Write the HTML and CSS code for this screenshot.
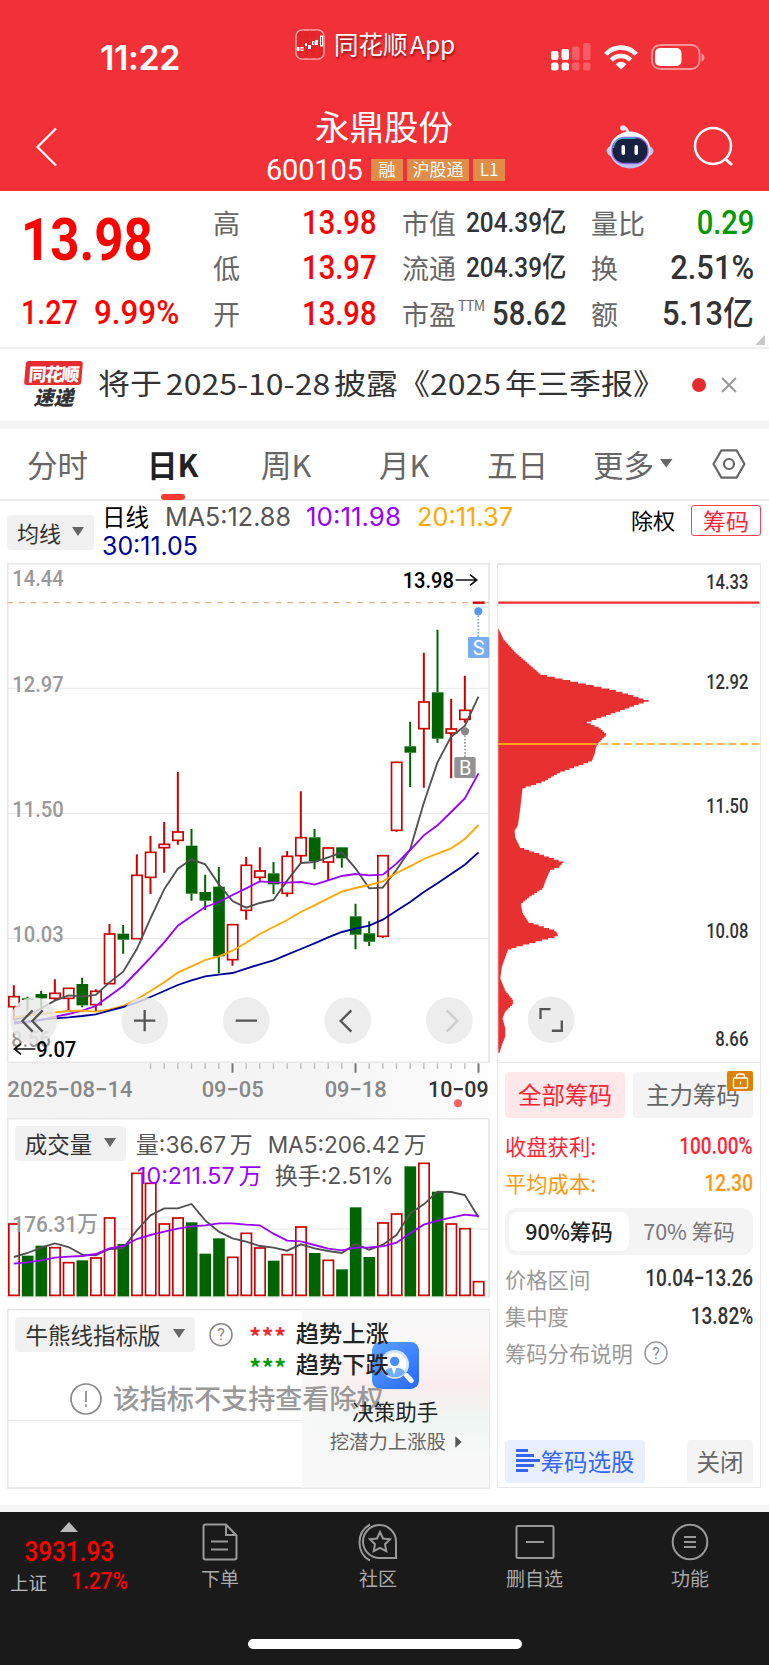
FILE: index.html
```html
<!DOCTYPE html>
<html lang="zh-CN">
<head>
<meta charset="utf-8">
<title>永鼎股份 600105</title>
<link rel="stylesheet" href="styles.css">
</head>
<body>
<header class="top">
  <div class="status">
    <span class="clock">11:22</span>
    <div class="app">
      <svg width="30" height="31" viewBox="0 0 30 31"><rect x="1" y="1" width="28" height="29" rx="6" fill="#e5242a" stroke="#f8a5a6" stroke-width="1.5"/><path d="M1 10H29M8 1V30M15 1V30M22 1V30" stroke="#d8353a" stroke-width=".6"/><g fill="#fff"><rect x="2" y="18" width="2.5" height="4"/><rect x="10" y="14" width="2" height="3"/><rect x="13" y="16" width="3" height="4"/><rect x="20" y="11" width="3" height="5"/></g><g fill="none" stroke="#fff"><rect x="6" y="18.500" width="2" height="3"/><rect x="17.500" y="12.500" width="1.500" height="3"/><rect x="25.500" y="7" width="2" height="10"/></g></svg>
      <span>同花顺 App</span>
    </div>
    <svg class="signal" width="40" height="28" viewBox="0 0 40 28" fill="#fff"><rect y="8" width="7.500" height="9" rx="2"/><rect x="10.500" y="6" width="7.500" height="11" rx="2"/><g opacity=".22"><rect x="21" y="3.500" width="7.500" height="13.500" rx="2"/><rect x="32" y="0" width="7.500" height="17" rx="2"/></g><rect y="19.500" width="7.500" height="8" rx="2.500"/><rect x="10.500" y="19.500" width="7.500" height="8" rx="2.500"/><g opacity=".22"><rect x="21" y="19.500" width="7.500" height="8" rx="2.500"/><rect x="32" y="19.500" width="7.500" height="8" rx="2.500"/></g></svg>
    <svg class="wifi" width="34" height="25" viewBox="0 0 34 25" fill="none" stroke="#fff" stroke-width="4.600"><path d="M1.800 9.200C10 .4 24 .4 32.200 9.200"/><path d="M7.300 15C12.500 9.600 21.500 9.600 26.700 15"/><path d="M11.700 19.200Q17 14.300 22.300 19.200L17 24.600Z" fill="#fff" stroke="none"/></svg>
    <svg class="battery" width="55" height="26" viewBox="0 0 55 26"><rect x="1" y="1" width="47.500" height="24" rx="8" fill="none" stroke="#f99497" stroke-width="1.800"/><rect x="4" y="4" width="26.500" height="18" rx="5" fill="#fff"/><path d="M50.500 9.500q3 1 3 4t-3 4z" fill="#f99497"/></svg>
  </div>
  <div class="nav">
    <svg class="back" width="24" height="40" viewBox="0 0 24 40"><path d="M21 1.500L2.500 20 21 38.500" fill="none" stroke="#fff" stroke-width="2.200"/></svg>
    <div class="stock">
      <h1>永鼎股份</h1>
      <div class="code"><span class="num6">600105</span><i>融</i><i class="w">沪股通</i><i>L1</i></div>
    </div>
    <svg class="robot" width="48" height="46" viewBox="0 0 48 46"><defs><linearGradient id="hd" x2="0" y2="1"><stop stop-color="#fff"/><stop offset="1" stop-color="#b9bdf0"/></linearGradient></defs><path d="M22 10C22 6 20 3.500 17.500 4" stroke="#e9eaff" stroke-width="3" fill="none"/><circle cx="17" cy="4" r="2.800" fill="#e9eaff"/><ellipse cx="24" cy="27" rx="23.500" ry="9" fill="#c6c7f1"/><ellipse cx="24" cy="26" rx="20.500" ry="18.500" fill="url(#hd)"/><rect x="6" y="13.500" width="36" height="26" rx="12.500" fill="#18213f" stroke="#8866e8" stroke-width="1.300"/><path d="M7.500 24q1-9 9-9.700h13" fill="none" stroke="#2ccbe6" stroke-width="1"/><rect x="15.500" y="21" width="3.500" height="10" rx="1.700" fill="#fff"/><rect x="28.500" y="21" width="3.500" height="10" rx="1.700" fill="#fff"/></svg>
    <svg class="search" width="42" height="42" viewBox="0 0 42 42" fill="none" stroke="#fff" stroke-width="2.500"><circle cx="20" cy="20" r="18"/><path d="M31.500 32l7.500 7" stroke-width="3"/></svg>
  </div>
</header>

<section class="quote">
  <div class="price"><b class="din l">13.98</b><div><span class="din l">1.27</span><span class="din l pct">9.99%</span></div></div>
  <dl class="q1"><dt>高</dt><dd class="din">13.98</dd><dt>低</dt><dd class="din">13.97</dd><dt>开</dt><dd class="din">13.98</dd></dl>
  <dl class="q2"><dt>市值</dt><dd class="din sm">204.39亿</dd><dt>流通</dt><dd class="din sm">204.39亿</dd><dt>市盈<sup>TTM</sup></dt><dd class="din">58.62</dd></dl>
  <dl class="q3"><dt>量比</dt><dd class="din green">0.29</dd><dt>换</dt><dd class="din wide">2.51%</dd><dt>额</dt><dd class="din wide">5.13亿</dd></dl>
  <svg class="corner" width="10" height="10"><path d="M10 0V10H0Z" fill="#c8c8c8"/></svg>
</section>

<section class="news">
  <div class="logo"><b>同花顺</b><em>速递</em></div>
  <svg class="newsline" width="567" height="44"><text x="-1" y="32" textLength="567" lengthAdjust="spacingAndGlyphs">将于 2025-10-28 披露《2025 年三季报》</text></svg>
  <span class="dot"></span>
  <svg class="x" width="16" height="16" viewBox="0 0 16 16"><path d="M1 1L15 15M15 1L1 15" stroke="#999" stroke-width="2"/></svg>
</section>

<nav class="tabs">
  <span>分时</span><span class="on">日K</span><span>周K</span><span>月K</span><span>五日</span><span class="more">更多<svg width="13" height="9"><path d="M0 0H12.500L6.200 8.500Z" fill="#666"/></svg></span>
  <svg width="34" height="30" viewBox="0 0 34 30" fill="none" stroke="#666" stroke-width="2.200"><path d="M9.500 1.300H24.500L32.500 15 24.500 28.700H9.500L1.500 15Z" stroke-linejoin="round"/><circle cx="17" cy="15" r="5"/></svg>
</nav>

<section class="avg">
  <button class="drop">均线<svg width="12" height="9"><path d="M0 0H12L6 9Z" fill="#666"/></svg></button>
  <svg class="legend" width="520" height="62" viewBox="102 501 520 62"><text x="102" y="526" textLength="47" fill="#000" class="cn">日线</text><text x="165" y="526" textLength="126">MA5:12.88</text><text x="306" y="526" textLength="95" fill="#9900ff">10:11.98</text><text x="417" y="526" textLength="96" fill="#ffa800">20:11.37</text><text x="102" y="555" textLength="96" fill="#000099">30:11.05</text></svg>
  <span class="chuquan">除权</span><button class="chip">筹码</button>
</section>

<main>
  <div class="left">
    <svg id="kline" width="485" height="500" viewBox="21 9 1455 1500">
      <g fill="none" stroke="#e8e8e8" stroke-width="4"><rect x="23" y="11" width="1444" height="1496" stroke-width="5"/><path d="M23 385H1467M23 761H1467M23 1136H1467" stroke-width="3"/></g>
      <path d="M22 128H1467" stroke="#dbb486" stroke-width="3.500" stroke-dasharray="17 18"/>
      <g class="dinsvg" fill="#999"><text x="37" y="79" textLength="154">14.44</text><text x="37" y="396" textLength="154">12.97</text><text x="37" y="771" textLength="154">11.50</text><text x="37" y="1145" textLength="154">10.03</text><text x="34" y="1460" textLength="118">8.56</text></g>
      <g id="candles"></g>
      <g class="dinsvg"><text x="1208" y="83" textLength="154" fill="#000">13.98</text></g>
      <path d="M1367 60H1428M1410 44L1430 60 1410 76" fill="none" stroke="#111" stroke-width="5"/>
      <circle cx="1435" cy="154" r="12" fill="#5599ee"/><path d="M1435 166V232" stroke="#77aaf2" stroke-width="5" stroke-dasharray="5 5"/><rect x="1404" y="231" width="64" height="63" rx="5" fill="#78adf3"/>
      <circle cx="1395" cy="514" r="12" fill="#888"/><path d="M1395 526V592" stroke="#999" stroke-width="5" stroke-dasharray="5 5"/><rect x="1363" y="591" width="64" height="63" rx="5" fill="#929292"/>
      <g font-family="Roboto" font-size="60" fill="#fff" text-anchor="middle"><text x="1436" y="284">S</text><text x="1396" y="644">B</text></g>
      <g fill="#e9e9e9" fill-opacity=".82"><circle cx="101" cy="1382" r="70"/><circle cx="434" cy="1382" r="70"/><circle cx="739" cy="1382" r="70"/><circle cx="1043" cy="1382" r="70"/><circle cx="1348" cy="1382" r="70"/></g>
      <g fill="none" stroke="#555" stroke-width="7"><path d="M98 1351L67 1383 98 1415M128 1351L97 1383 128 1415M402 1382H466M434 1350V1414M707 1382H771M1054 1351L1022 1383 1054 1415"/><path d="M1340 1351L1372 1383 1340 1415" stroke="#ccc"/></g>
      <g class="dinsvg"><text x="109" y="1490" textLength="120" fill="#000">9.07</text></g>
      <path d="M106 1467H45M63 1451L43 1467 63 1483" fill="none" stroke="#111" stroke-width="5"/>
    </svg>
    <svg id="axis" width="485" height="55" viewBox="21 190 1455 165">
      <defs><linearGradient id="ax"><stop stop-color="#f3f3f3"/><stop offset=".65" stop-color="#f5f5f5"/><stop offset="1" stop-color="#fdfdfd"/></linearGradient></defs>
      <rect x="21" y="190" width="1448" height="165" fill="url(#ax)"/><g id="ticks"></g>
      <g class="dinsvg" fill="#888"><text x="22" y="293" textLength="376">2025−08−14</text><text x="605" y="293" textLength="186">09−05</text><text x="974" y="293" textLength="186">09−18</text><text x="1284" y="293" textLength="182" fill="#333">10−09</text></g>
      <circle cx="1374" cy="311" r="12" fill="#f96060"/>
    </svg>
    <div class="vol">
      <svg id="volume" width="485" height="180" viewBox="21 355 1455 540">
        <g fill="none" stroke="#e8e8e8"><rect x="23" y="357" width="1444" height="535" stroke-width="5"/><path d="M23 688H1467" stroke-width="3"/></g>
        <g id="bars"></g>
        <g class="dinsvg" fill="#999"><text x="37" y="697" textLength="257">176.31万</text></g>
        <g id="vlines"></g>
        <g class="voltext" fill="#555"><text x="408" y="459" textLength="350">量:36.67 万</text><text x="803" y="459" textLength="476">MA5:206.42 万</text><text x="411" y="553" textLength="374" fill="#9900ff">10:211.57 万</text><text x="824" y="553" textLength="357">换手:2.51%</text></g>
      </svg>
      <button class="drop">成交量<svg width="12" height="9"><path d="M0 0H12L6 9Z" fill="#666"/></svg></button>
    </div>
    <div class="bull">
      <svg width="485" height="180" viewBox="21 27 1455 540">
        <defs><linearGradient id="bg" x2="0" y2="1"><stop stop-color="#f8f8f8"/><stop offset=".2" stop-color="#faf7f7"/><stop offset=".42" stop-color="#fbecee"/><stop offset=".62" stop-color="#eff6f3"/><stop offset=".85" stop-color="#f8f8f8"/></linearGradient><linearGradient id="fade"><stop stop-color="#f8f8f8"/><stop offset=".75" stop-color="#f8f8f8" stop-opacity="0"/></linearGradient><linearGradient id="bl" x2="1" y2="1"><stop stop-color="#5aa5ff"/><stop offset="1" stop-color="#2868fb"/></linearGradient></defs>
        <rect x="23" y="29" width="1444" height="535" fill="none" stroke="#e8e8e8" stroke-width="5"/><path d="M23 361H906" stroke="#e8e8e8" stroke-width="3"/>
        <rect x="906" y="31" width="561" height="531" fill="url(#bg)"/><rect x="906" y="31" width="300" height="531" fill="url(#fade)"/>
        <rect x="1116" y="126" width="141" height="141" rx="25" fill="url(#bl)"/><circle cx="1184" cy="193" r="43" fill="#d4e6ff"/><circle cx="1184" cy="193" r="35" fill="#fff"/><circle cx="1184" cy="184" r="14" fill="#448cff"/><path d="M1153 218Q1158 203 1175 204L1182 224 1189 204Q1210 203 1215 218A43 43 0 0 1 1153 218Z" fill="#71aeff"/><path d="M1220 227L1234 242" stroke="#fff" stroke-width="15" stroke-linecap="round"/>
        <g fill="none" stroke="#888" stroke-width="5"><circle cx="663" cy="104" r="33" stroke-width="4.500"/><circle cx="258" cy="297" r="45"/><path d="M258 273V306M258 313V320"/></g>
        <g class="cn"><text x="663" y="121" text-anchor="middle" font-size="48" fill="#888" font-family="Roboto">?</text><text x="748 785 823" y="137" font-size="70" font-weight="700" fill="#f02b2f">***</text><text x="748 785 823" y="230" font-size="70" font-weight="700" fill="#009b00">***</text>
        <text x="887" y="126" textLength="279" font-size="69" font-weight="500" fill="#222">趋势上涨</text><text x="887" y="218" textLength="279" font-size="69" font-weight="500" fill="#222">趋势下跌</text>
        <text x="338" y="328" textLength="813" font-size="81" fill="#999" font-weight="500">该指标不支持查看除权</text>
        <text x="1057" y="361" textLength="258" font-size="64" fill="#222">决策助手</text><text x="989" y="448" textLength="349" font-size="58" fill="#666">挖潜力上涨股</text></g><path d="M1366 409L1385 426 1366 443Z" fill="#555"/>
      </svg>
      <button class="drop">牛熊线指标版<svg width="12" height="9"><path d="M0 0H12L6 9Z" fill="#666"/></svg></button>
    </div>
  </div>

  <aside class="panel">
    <svg id="chips" width="262" height="500" viewBox="24 9 786 1500">
      <g id="dist"></g><path d="M24 128H809" stroke="#f22b30" stroke-width="7"/><path d="M24 553H320" stroke="#ffa11a" stroke-width="6"/><path d="M331 553H809" stroke="#f8a11a" stroke-width="5" stroke-dasharray="24 11"/>
      <g class="dinsvg small" fill="#333"><text x="649" y="88" textLength="127">14.33</text><text x="649" y="387" textLength="127">12.92</text><text x="649" y="762" textLength="127">11.50</text><text x="649" y="1137" textLength="127">10.08</text><text x="676" y="1460" textLength="100">8.66</text></g>
      <circle cx="183" cy="1382" r="70" fill="#ececec"/><path d="M151 1380V1350H181M215 1384V1415H185" fill="none" stroke="#555" stroke-width="7"/>
    </svg>
    <div class="info">
      <div class="pick"><button class="hot">全部筹码</button><button>主力筹码<span class="lock"><svg width="26" height="20" viewBox="0 0 26 20" fill="none" stroke="#fff" stroke-width="1.300"><rect x="6.500" y="7" width="14" height="10" rx="1"/><path d="M9.500 7V5.500q0-2.500 2.500-2.500h3q2.500 0 2.500 2.500V7M13.500 10.500v3"/></svg></span></button></div>
      <div class="row red"><span>收盘获利:</span><b class="din">100.00%</b></div>
      <div class="row org"><span>平均成本:</span><b class="din">12.30</b></div>
      <div class="seg"><b>90%筹码</b><span>70% 筹码</span></div>
      <div class="row"><span>价格区间</span><b class="din">10.04−13.26</b></div>
      <div class="row"><span>集中度</span><b class="din">13.82%</b></div>
      <div class="row help"><span>筹码分布说明</span><svg width="24" height="24" viewBox="0 0 24 24"><circle cx="12" cy="12" r="11" fill="none" stroke="#999" stroke-width="1.500"/><text x="12" y="17.500" text-anchor="middle" font-size="16" fill="#888" font-family="Roboto">?</text></svg></div>
      <div class="foot"><button class="blue"><svg width="24" height="24" viewBox="0 0 24 24"><path d="M0 1.500H12M0 6.500H18M0 11.500H24M0 16.500H18M0 21.500H12" stroke="#3465f5" stroke-width="2.800"/></svg>筹码选股</button><button>关闭</button></div>
    </div>
  </aside>
</main>

<footer>
  <div class="bar">
    <div class="index"><svg width="18" height="10"><path d="M9 0L18 10H0Z" fill="#bbb"/></svg><b class="din">3931.93</b><p><span>上证</span><b class="din l">1.27%</b></p></div>
    <div class="item"><svg width="36" height="38" viewBox="0 0 36 38"><path d="M3.500 1.500H24L34.500 12.500V34.500Q34.500 36.500 32.500 36.500H3.500Q1.500 36.500 1.500 34.500V3.500Q1.500 1.500 3.500 1.500ZM24 1.500V12H34.500M9 18.500H26M9 26.500H26"/></svg>下单</div>
    <div class="item"><svg width="40" height="38" viewBox="0 0 40 38"><path d="M12 1.500C-2 9-2 30 12 37.500M38 35H23A16.500 16.500 0 1 1 38 18.500ZM22 9l3 6.500 7 .8-5 4.900 1.300 7-6.300-3.400-6.300 3.400 1.300-7-5-4.900 7-.8Z"/></svg>社区</div>
    <div class="item"><svg width="40" height="38" viewBox="0 0 40 38"><rect x="1.500" y="3" width="37" height="32" rx="1.500"/><path d="M11 19H29"/></svg>删自选</div>
    <div class="item"><svg width="38" height="38" viewBox="0 0 38 38"><circle cx="19" cy="19" r="17.300"/><path d="M13 14H25M13 19H25M13 24H25"/></svg>功能</div>
  </div>
  <div class="home"></div>
</footer>
<script src="chart.js"></script>
</body>
</html>
```
FILE: styles.css
```css
* { box-sizing: border-box; }
body { margin: 0; width: 769px; background: #fff; font-family: "Noto Sans CJK SC", sans-serif; color: #333; overflow-x: hidden; }
button { border: 0; padding: 0 0 2px; font: inherit; color: inherit; background: none; }
svg { display: block; flex: none; }
svg text { white-space: pre; }
.din { font-family: Roboto, "Noto Sans CJK SC", sans-serif; font-weight: 500; display: inline-block; transform: scaleX(.87); transform-origin: right center; white-space: nowrap; }
.din.l { transform-origin: left center; }
.din.pct { transform: scaleX(.95); }
.din.wide { transform: scaleX(.92); }

.top { height: 191px; background: #f23038; color: #fff; }
.status { height: 100px; display: flex; align-items: flex-start; }
.clock { width: 194px; margin-left: 100px; margin-right: 1px; margin-top: 38px; font: 600 34px/40px Inter, sans-serif; letter-spacing: -.4px; }
.app { width: 256px; margin-top: 28px; display: flex; align-items: center; gap: 9px; font-size: 24.500px; line-height: 32px; word-spacing: -3px; text-shadow: 1px 2px 2px rgba(90,0,0,.6); }
.signal { margin-top: 43px; }
.wifi { margin: 45px 13px 0; }
.battery { margin-top: 44px; }
.nav { height: 91px; display: flex; align-items: flex-start; }
.back { margin: 27px 0 0 35px; }
.stock { width: 547px; padding-left: 207px; }
.stock h1 { margin: 0 0 2px 49px; font-weight: 400; font-size: 34.500px; line-height: 50px; }
.code { display: flex; height: 36px; align-items: center; gap: 4px; }
.num6 { font: 400 29px/36px Roboto, sans-serif; width: 101px; letter-spacing: -.2px; }
.code i { width: 32px; height: 22px; text-align: center; font-style: normal; font-size: 17px; line-height: 20px; background: #e08d49; }
.code i.w { width: 62px; }
.robot { margin-top: 24px; }
.search { margin: 26px 0 0 39px; }

.quote { position: relative; height: 158px; border-bottom: 2px solid #f0f0f0; display: grid; grid-template-columns: 213px 163px 190px 188px; }
.price { color: #f00; padding: 13px 0 0 21px; }
.price > b { font-size: 60px; line-height: 72px; font-weight: 700; display: block; transform: scaleX(.85); }
.price > div { display: flex; margin-top: 18px; height: 38px; line-height: 38px; font-size: 33px; }
.price span:first-child { width: 73px; }
dl { margin: 9px 0 0; display: grid; grid-template-columns: auto auto; grid-template-rows: repeat(3, 45.500px); align-items: center; }
dt { color: #666; font-size: 27px; line-height: 44px; white-space: nowrap; }
dd { margin: 0; font-size: 33.500px; line-height: 44px; text-align: right; justify-self: end; }
dd.sm { font-size: 28px; }
.q1 dd { color: #f00; }
.q2 { margin-left: 26px; grid-template-columns: 54px 110px; width: 164px; }
.q3 { margin-left: 25px; }
.q3 dd.green { color: #090; }
sup { font-size: 14px; line-height: 0; vertical-align: 14px; margin-left: 2px; letter-spacing: -.5px; }
.corner { position: absolute; right: 4px; bottom: 2px; }

.news { height: 80px; border-bottom: 8px solid #f4f4f4; display: flex; align-items: center; padding-left: 25px; }
.logo { width: 57px; height: 48px; font-size: 18px; line-height: 24px; text-align: center; }
.logo b { display: block; color: #fff; background: #e72c31; border-radius: 3px; font-weight: 900; transform: skewX(-5deg); letter-spacing: -1.500px; }
.logo em { display: block; font-weight: 900; font-size: 20px; line-height: 24px; }
.newsline { margin: 0 26px 0 17px; font-size: 29px; fill: #333; overflow: visible; word-spacing: -3px; }
.dot { width: 14px; height: 14px; border-radius: 50%; background: #e72c31; margin-right: 15px; }
.tabs { height: 72px; border-bottom: 2px solid #ebebeb; display: flex; align-items: center; color: #666; font-size: 30.500px; line-height: 68px; padding-left: 27px; }
.tabs > span { width: 111px; white-space: nowrap; margin-top: -1px; }
.tabs .on { color: #222; font-weight: 700; margin-left: 9px; width: 114px; position: relative; }
.tabs .on::after { content: ""; position: absolute; left: 14px; bottom: -2px; width: 24px; height: 6px; border-radius: 3px; background: #fb3a31; }
.tabs span:nth-child(3) { width: 118px; }
.tabs span:nth-child(4) { width: 108px; }
.tabs span:nth-child(5) { width: 106px; }
.tabs .more { display: flex; align-items: center; gap: 6px; width: 119px; }

.drop { display: flex; align-items: center; justify-content: center; gap: 12px; height: 35px; border-radius: 4px; background: #f1f1f1; font-size: 22.500px; color: #333; }
.avg { height: 62px; display: flex; }
.avg .drop { margin: 14px 8px 0 7px; width: 87px; font-size: 22px; gap: 11px; }
.legend { font: 25.500px Inter, sans-serif; fill: #555; overflow: visible; }
.legend .cn { font: 24px "Noto Sans CJK SC", sans-serif; }
.chuquan { margin: 2px 0 0 9px; width: 60px; font-size: 22px; line-height: 32px; color: #000; }
.chip { margin-top: 4px; width: 70px; height: 31px; border: 1.500px solid #ff4050; border-radius: 3px; color: #ff2436; font-size: 23px; line-height: 26px; }

main { display: flex; padding: 0 0 17px 7px; }
.left { width: 490px; }
.left > svg { overflow: visible; }
.dinsvg { font: 500 67px Roboto, "Noto Sans CJK SC", sans-serif; }
.dinsvg.small { font-size: 58px; }
.voltext { font: 67px Inter, "Noto Sans CJK SC", sans-serif; word-spacing: -8px; }
.cn { font-family: "Noto Sans CJK SC", sans-serif; }
.vol, .bull { position: relative; height: 191px; }
.bull { height: 179px; }
.vol .drop, .bull .drop { position: absolute; left: 8px; top: 8px; width: 111px; }
.bull .drop { width: 180px; }
.panel { width: 264px; height: 925px; border: 1px solid #e8e8e8; border-top-width: 2px; }
#chips { margin-top: -2px; border-bottom: 1px solid #e8e8e8; }
.info { padding: 9px 7px 0; height: 424px; display: flex; flex-direction: column; }
.pick { display: flex; gap: 8px; }
.pick button, .foot button { position: relative; width: 120px; height: 46px; border-radius: 4px; background: #f4f4f4; color: #666; font-size: 23.500px; }
.pick .hot { color: #ff2436; background: #ffe8ea; }
.lock { position: absolute; top: -1px; right: 0; width: 26px; height: 20px; background: #db8209; border-radius: 2px; }
.row { display: flex; justify-content: space-between; align-items: center; height: 37.300px; font-size: 21.300px; color: #999; padding: 0; flex: none; }
.row .din { font-size: 23.500px; color: #333; transform: scaleX(.81); }
.row.red { margin-top: 9px; color: #ff2436; }
.row.org, .row.org .din { color: #ff960a; }
.row.red .din { color: #ff2436; }
.seg { display: flex; align-items: center; height: 47px; margin: 6px 0 5px; padding: 4px; border-radius: 11px; background: #f4f4f4; font-size: 21.500px; color: #777; flex: none; }
.seg b { width: 120px; height: 39px; background: #fff; border-radius: 8px; text-align: center; line-height: 37px; font-weight: 500; color: #222; }
.seg span { flex: 1; text-align: center; line-height: 37px; height: 39px; }
.help { justify-content: flex-start; gap: 11px; }
.foot { display: flex; justify-content: space-between; margin-top: auto; margin-bottom: 4px; }
.foot button { height: 43px; width: 66px; }
.foot .blue { width: 140px; display: flex; align-items: center; justify-content: center; gap: 1px; color: #3465f5; background: #e9effe; }

footer { height: 160px; border-top: 7px solid #f4f4f4; background: #1a1a1a; }
.bar { display: grid; grid-template-columns: 137px 166px 150px 163px 148px; height: 127px; }
.index { color: #bbb; padding-top: 10px; position: relative; }
.index > svg { margin-left: 60px; }
.index > b { display: block; color: #f00; font-size: 27px; line-height: 30px; height: 30px; margin-top: 5px; width: 114px; text-align: right; transform: scaleX(.9); }
.index p { display: flex; margin: 2px 0 0 10px; font-size: 18.500px; line-height: 26px; }
.index p span { width: 61px; }
.index p b { color: #f00; font-size: 23px; transform: scaleX(.91); }
.item { display: flex; flex-direction: column; align-items: center; padding-top: 11px; color: #aaa; font-size: 19px; line-height: 34px; }
.item svg { fill: none; stroke: #999; stroke-width: 2; }
.home { width: 274px; height: 10px; margin-left: 248px; border-radius: 5px; background: #fff; }
```
FILE: chart.js
```js
// Chart units are three per pixel.
const STEP = 41, X0 = 41.5;
const RED = '#cc0000', GREEN = '#006400';
const put = (id, html) => { document.getElementById(id).innerHTML = html; };
const cx = i => X0 + STEP * i;

// colour, high, body top, body bottom, low
const candles = `r1276,1310,1340,1380 g1310,1315,1320,1352 g1293,1302,1315,1342 r1258,1300,1315,1322 r1285,1285,1315,1352 g1253,1272,1336,1342 r1288,1294,1334,1355 r1092,1122,1271,1271 g1095,1121,1139,1181 r883,946,1136,1136 r827,877,952,1002 r786,853,863,938 r636,816,841,854 g807,857,1001,1022 g944,996,1022,1050 g921,980,1189,1240 r1092,1094,1199,1217 r891,916,1051,1079 r862,933,952,962 g906,940,973,1002 r873,889,1000,1010 r694,833,887,910 g807,832,903,928 r862,864,906,960 g862,862,895,923 g1031,1069,1124,1168 g1084,1120,1145,1158 r885,887,1129,1134 r605,607,811,815 g485,559,578,681 r278,426,506,683 g209,397,536,548 r416,507,519,655 r347,451,478,488 r126,127,129,130`.split(' ');

const body = (c, i, top, bottom) => c === 'r'
  ? `<rect x="${cx(i) - 15}" y="${top}" width="31" height="${bottom - top}" fill="none" stroke="${RED}" stroke-width="5"/>`
  : `<rect x="${cx(i) - 17}" y="${top}" width="35" height="${bottom - top}" fill="${GREEN}"/>`;
const line = (ys, color) =>
  `<polyline points="${ys.map((y, i) => cx(i) + ',' + y).join(' ')}" fill="none" stroke="${color}" stroke-width="5.500"/>`;

let out = candles.map((s, i) => {
  const c = s[0], [h, t, b, l] = s.slice(1).split(',').map(Number);
  return `<path d="M${cx(i)} ${h}V${t}M${cx(i)} ${b}V${l}" stroke="${c === 'r' ? RED : GREEN}" stroke-width="6"/>` + body(c, i, t, b);
}).join('');
out += line([1380,1368,1345,1322,1306,1310,1305,1267,1235,1167,1075,988,926,898,913,973,1023,1043,1029,1020,962,909,906,892,877,925,985,983,930,868,728,607,530,498,410], '#505050');
out += line([1391,1388,1380,1370,1362,1352,1338,1308,1278,1236,1193,1147,1097,1069,1041,1026,1005,985,964,967,968,966,974,961,948,942,946,944,911,870,826,796,756,715,640], '#9900ff');
out += line([1371,1367,1362,1357,1353,1352,1355,1348,1338,1318,1293,1267,1238,1219,1200,1189,1172,1148,1122,1101,1080,1056,1036,1015,995,984,975,964,939,919,897,881,865,837,795], '#ffa800');
out += line([1387,1384,1379,1375,1372,1368,1363,1352,1341,1328,1311,1293,1275,1261,1249,1244,1239,1226,1213,1201,1184,1167,1150,1132,1116,1106,1097,1079,1052,1026,996,970,942,914,877], '#000099');
put('candles', out);

let ticks = '';
for (let i = 10; i < 35; i++) {
  const major = i === 16 || i === 25 || i === 34;
  ticks += `<path d="M${cx(i)} 191V${major ? 219 : 208}" stroke="${major ? '#777' : '#bbb'}" stroke-width="${major ? 6 : 4}"/>`;
}
put('ticks', ticks);

const volumes = 'r671 g768 g738 r742 r787 g782 r773 r653 g733 r519 r549 r671 r653 g668 g762 g716 r771 r699 r743 g783 r763 r680 g760 r780 g809 g623 g772 r668 r641 g500 r489 g576 r671 r685 r844'.split(' ');
put('bars', volumes.map((v, i) => body(v[0], i, +v.slice(1) + (v[0] === 'r' ? 2 : 0), v[0] === 'r' ? 887 : 890)).join(''));
put('vlines',
  line([772,760,744,731,742,765,767,748,746,692,647,626,626,613,662,696,716,726,739,744,753,734,746,754,760,733,750,735,706,641,614,576,577,586,653], '#505050') +
  line([792,788,782,774,771,769,763,746,739,718,706,696,687,680,677,671,671,675,677,702,723,725,736,747,752,744,743,740,729,701,675,663,654,645,649], '#9900ff'));

// Chip distribution outline, drawn as stacked horizontal slices.
const outline = [[26,206],[40,236],[75,275],[152,342],[245,362],[358,386],[405,398],[476,421],[440,433],[385,453],[345,467],[290,486],[328,502],[350,523],[325,547],[318,560],[314,580],[305,602],[260,618],[205,638],[160,664],[97,684],[90,745],[83,795],[73,812],[75,832],[90,862],[150,882],[220,906],[205,922],[180,930],[165,965],[158,985],[115,1012],[92,1032],[97,1058],[115,1086],[198,1113],[204,1128],[140,1145],[75,1162],[53,1170],[35,1220],[30,1255],[45,1292],[68,1320],[68,1333],[45,1355],[37,1375],[45,1405],[45,1430],[35,1455],[28,1478]];
let d = 'M24 206';
for (let y = 206, k = 0; y < 1478; y += 5) {
  while (k < outline.length - 2 && outline[k + 1][1] < y) k++;
  const [x1, y1] = outline[k], [x2, y2] = outline[k + 1];
  d += `H${(x1 + (x2 - x1) * (y - y1) / (y2 - y1)).toFixed(1)}V${y + 5}`;
}
put('dist', `<path d="${d}H24Z" fill="#e93030"/>`);

document.querySelectorAll('text[textLength]').forEach(t => t.setAttribute('lengthAdjust', 'spacingAndGlyphs'));
```
